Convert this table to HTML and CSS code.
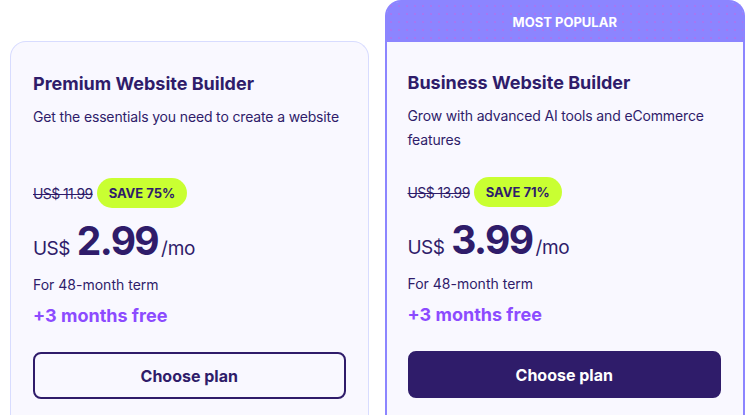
FILE: index.html
```html
<!DOCTYPE html>
<html lang="en">
<head>
    <meta charset="UTF-8">
    <meta name="viewport" content="width=device-width, initial-scale=1.0">
    <title>Website Builder Plans</title>
    <link rel="stylesheet" href="styles.css">
</head>
<body>
    <div class="plans">
        <div class="plan">
            <div class="plan-body">
                <h2 class="plan-title">Premium Website Builder</h2>
                <p class="plan-desc">Get the essentials you need to create a website</p>
                <div class="plan-old">
                    <span class="old-price">US$ 11.99</span>
                    <span class="save">SAVE 75%</span>
                </div>
                <div class="plan-price">
                    <span class="currency">US$</span>
                    <span class="amount">2.99</span><span class="period">/mo</span>
                </div>
                <p class="plan-term">For 48-month term</p>
                <p class="plan-bonus">+3 months free</p>
                <button class="plan-button">Choose plan</button>
            </div>
        </div>

        <div class="plan plan-popular">
            <div class="plan-ribbon">MOST POPULAR</div>
            <div class="plan-body">
                <h2 class="plan-title">Business Website Builder</h2>
                <p class="plan-desc">Grow with advanced AI tools and eCommerce features</p>
                <div class="plan-old">
                    <span class="old-price">US$ 13.99</span>
                    <span class="save">SAVE 71%</span>
                </div>
                <div class="plan-price">
                    <span class="currency">US$</span>
                    <span class="amount">3.99</span><span class="period">/mo</span>
                </div>
                <p class="plan-term">For 48-month term</p>
                <p class="plan-bonus">+3 months free</p>
                <button class="plan-button primary">Choose plan</button>
            </div>
        </div>
    </div>
</body>
</html>
```

FILE: styles.css
```css
body {
    margin: 0;
    background-color: #ffffff;
    color: #2f1c6a;
    font-family: Inter, "DejaVu Sans", sans-serif;
}
.plans {
    display: flex;
    align-items: flex-end;
    gap: 16px;
    padding: 0 3px 0 10px;
    height: 415px;
    overflow: hidden;
}
.plan {
    flex: 1;
    height: 374px;
    background-color: #f9f8ff;
    border: 1px solid #d8dcff;
    border-bottom: none;
    border-radius: 16px 16px 0 0;
    box-sizing: border-box;
}
.plan-popular {
    height: 415px;
    border: 2px solid #8c85ff;
    border-bottom: none;
    display: flex;
    flex-direction: column;
}
.plan-ribbon {
    height: 40px;
    flex: none;
    background-color: #8c85ff;
    background-image: radial-gradient(circle, rgba(214, 90, 220, 0.35) 0.8px, transparent 1.2px);
    background-size: 8px 8px;
    color: #ffffff;
    font-size: 13px;
    font-weight: 700;
    display: flex;
    align-items: center;
    justify-content: center;
    border-radius: 12px 12px 0 0;
}
.plan-body {
    padding: 30px 22px 0 22px;
}
.plan-popular .plan-body {
    padding: 29px 22px 0 21px;
}
.plan-title {
    margin: 0;
    font-size: 18px;
    line-height: 24px;
    font-weight: 700;
}
.plan-desc {
    margin: 9px 0 0 0;
    font-size: 14px;
    line-height: 24px;
    letter-spacing: -0.15px;
    height: 48px;
}
.plan-old {
    display: flex;
    align-items: center;
    gap: 4px;
    margin-top: 25px;
}
.old-price {
    font-size: 14px;
    letter-spacing: -0.6px;
    text-decoration: line-through;
}
.save {
    background-color: #c9ff32;
    font-size: 13px;
    font-weight: 700;
    height: 30px;
    line-height: 30px;
    padding: 0 12px;
    border-radius: 15px;
}
.plan-price {
    margin-top: 9px;
    display: flex;
    align-items: baseline;
    height: 50px;
}
.currency {
    font-size: 19px;
    letter-spacing: -0.6px;
    margin-right: 7px;
}
.amount {
    font-size: 39px;
    font-weight: 700;
    letter-spacing: -1.6px;
    margin-right: 3px;
}
.period {
    font-size: 19px;
    letter-spacing: -0.3px;
}
.plan-term {
    margin: 8px 0 0 0;
    font-size: 14px;
    line-height: 20px;
}
.plan-bonus {
    margin: 9px 0 0 0;
    font-size: 18px;
    line-height: 24px;
    font-weight: 700;
    color: #8c4bff;
}
.plan-button {
    display: block;
    width: 100%;
    height: 47px;
    margin-top: 24px;
    background-color: transparent;
    border: 2px solid #2f1c6a;
    border-radius: 8px;
    color: #2f1c6a;
    font-family: inherit;
    font-size: 16px;
    font-weight: 700;
    cursor: pointer;
}
.plan-button.primary {
    background-color: #2f1c6a;
    color: #ffffff;
}
```
